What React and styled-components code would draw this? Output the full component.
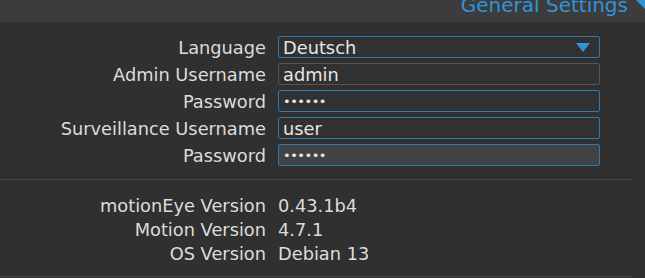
import React from 'react'
import styled, { createGlobalStyle } from 'styled-components'

const GlobalStyle = createGlobalStyle`
  html, body {
    margin: 0;
    padding: 0;
    background: #303030;
    font-family: "DejaVu Sans", "Open Sans", sans-serif;
    color: #dcdcdc;
  }
`

const settings = [
  { label: 'Language', value: 'Deutsch', select: true, tone: 'blue' },
  { label: 'Admin Username', value: 'admin', tone: 'gray' },
  { label: 'Password', value: '••••••', secret: true, tone: 'blue' },
  { label: 'Surveillance Username', value: 'user', tone: 'blue' },
  { label: 'Password', value: '••••••', secret: true, tone: 'blue', active: true },
]

const versions = [
  { label: 'motionEye Version', value: '0.43.1b4' },
  { label: 'Motion Version', value: '4.7.1' },
  { label: 'OS Version', value: 'Debian 13' },
]

export default function App() {
  return (
    <Page>
      <GlobalStyle />
      <Header>
        <Title>General Settings</Title>
        <Corner />
      </Header>

      <Section>
        {settings.map((s, i) => (
          <Row key={i}>
            <Label>{s.label}</Label>
            <Field tone={s.tone} active={s.active}>
              <FieldText secret={s.secret}>{s.value}</FieldText>
              {s.select && <Arrow />}
            </Field>
          </Row>
        ))}
      </Section>

      <Divider />

      <InfoSection>
        {versions.map((v, i) => (
          <InfoRow key={i}>
            <Label>{v.label}</Label>
            <Value>{v.value}</Value>
          </InfoRow>
        ))}
      </InfoSection>

      <Divider />
    </Page>
  )
}

const Page = styled.div`
  width: 645px;
  height: 278px;
  overflow: hidden;
  background: #303030;
`

const Header = styled.div`
  position: relative;
  height: 22px;
  background: #3c3c3c;
  overflow: hidden;
  display: flex;
  justify-content: flex-end;
  align-items: flex-end;
  padding-right: 17px;
`

const Title = styled.div`
  font-size: 20px;
  line-height: 20px;
  color: #3194d8;
  margin-bottom: 7px;
  white-space: nowrap;
`

const Corner = styled.div`
  position: absolute;
  top: 0;
  right: 0;
  width: 0;
  height: 0;
  border-top: 9px solid #3194d8;
  border-left: 9px solid transparent;
`

const Section = styled.div`
  display: flex;
  flex-direction: column;
  gap: 5px;
  padding: 14px 0 13px;
`

const Row = styled.div`
  display: grid;
  grid-template-columns: 266px 322px;
  column-gap: 12px;
  align-items: center;
  height: 22px;
`

const Label = styled.div`
  text-align: right;
  font-size: 17.8px;
  white-space: nowrap;
  color: #dcdcdc;
`

const Field = styled.div`
  position: relative;
  box-sizing: border-box;
  height: 22px;
  display: flex;
  align-items: center;
  padding: 0 4px;
  border: 1px solid ${p => (p.tone === 'blue' ? '#2f78b0' : '#555')};
  border-radius: 2px;
  background: ${p => (p.active ? '#424242' : '#313131')};
`

const FieldText = styled.span`
  font-size: ${p => (p.secret ? '13px' : '17.8px')};
  letter-spacing: ${p => (p.secret ? '-0.5px' : '0')};
  color: #e6e6e6;
`

const Arrow = styled.span`
  position: absolute;
  right: 9px;
  top: 6px;
  width: 0;
  height: 0;
  border-left: 7px solid transparent;
  border-right: 7px solid transparent;
  border-top: 9px solid #3194d8;
`

const Divider = styled.div`
  width: 631px;
  height: 1px;
  background: #474747;
`

const InfoSection = styled.div`
  display: flex;
  flex-direction: column;
  padding: 13px 0 11px;
`

const InfoRow = styled.div`
  display: grid;
  grid-template-columns: 266px 1fr;
  column-gap: 12px;
  height: 24px;
  align-items: center;
`

const Value = styled.div`
  font-size: 17.8px;
  color: #dcdcdc;
`
